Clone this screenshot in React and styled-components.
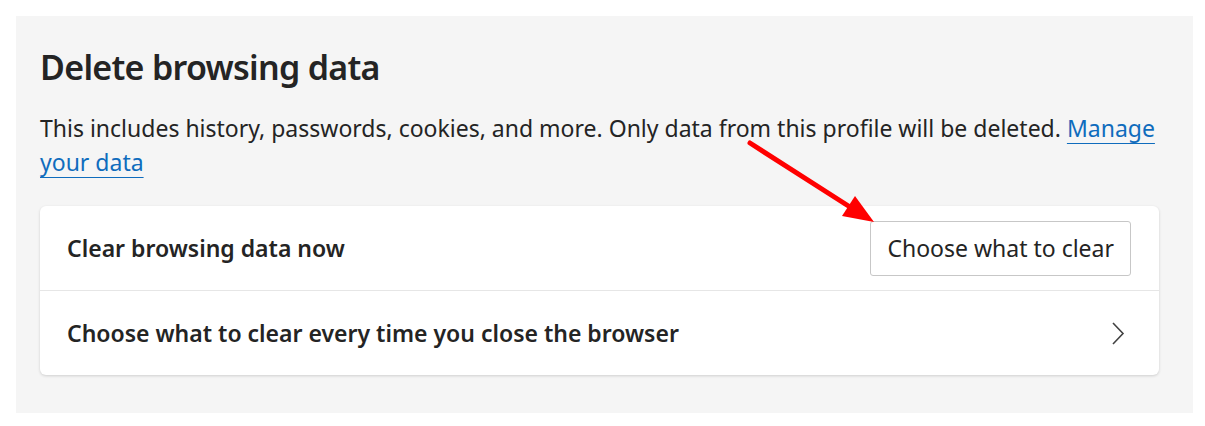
import React from "react";
import styled, { createGlobalStyle } from "styled-components";

const GlobalStyle = createGlobalStyle`
  body {
    margin: 0;
    background: #ffffff;
    font-family: "Noto Sans", "Open Sans", sans-serif;
    color: #242424;
  }
`;

const Page = styled.div`
  padding: 16px 12px 13px 16px;
`;

const Panel = styled.section`
  position: relative;
  background: #f5f5f5;
  padding: 29px 34px 38px 24px;
  height: 397px;
  box-sizing: border-box;
`;

const Heading = styled.h1`
  margin: 0;
  font-size: 34px;
  font-weight: 600;
  line-height: 44px;
  letter-spacing: -0.7px;
`;

const Intro = styled.p`
  margin: 22px 0 27px;
  font-size: 23px;
  line-height: 34px;
`;

const Link = styled.a`
  color: #0f6cbd;
  text-decoration: underline;
  text-underline-offset: 6px;
  text-decoration-thickness: 1px;
`;

const Card = styled.div`
  background: #ffffff;
  border-radius: 6px;
  box-shadow: 0 1px 3px rgba(0, 0, 0, 0.16);
`;

const Row = styled.div`
  display: flex;
  align-items: center;
  justify-content: space-between;
  height: 84px;
  padding: 0 28px 0 27px;
  border-top: ${(p) => (p.$divided ? "1px solid #e6e6e6" : "none")};
`;

const RowLabel = styled.span`
  font-size: 23px;
  font-weight: 600;
`;

const Button = styled.button`
  font-family: inherit;
  font-size: 23px;
  color: #242424;
  background: #ffffff;
  border: 1px solid #c7c7c7;
  border-radius: 3px;
  height: 55px;
  padding: 0 16px;
  cursor: pointer;
`;

const ChevronIcon = styled.svg`
  margin-right: 6px;
`;

const Arrow = styled.svg`
  position: absolute;
  left: 720px;
  top: 115px;
  pointer-events: none;
`;

const Chevron = () => (
  <ChevronIcon width="14" height="24" viewBox="0 0 14 24" fill="none">
    <path d="M2 2 L12 12.5 L2 23" stroke="#424242" strokeWidth="1.6" />
  </ChevronIcon>
);

export default function App() {
  return (
    <>
      <GlobalStyle />
      <Page>
        <Panel>
          <Heading>Delete browsing data</Heading>
          <Intro>
            This includes history, passwords, cookies, and more. Only data from
            this profile will be deleted. <Link href="#">Manage your data</Link>
          </Intro>
          <Card>
            <Row>
              <RowLabel>Clear browsing data now</RowLabel>
              <Button>Choose what to clear</Button>
            </Row>
            <Row $divided>
              <RowLabel>
                Choose what to clear every time you close the browser
              </RowLabel>
              <Chevron />
            </Row>
          </Card>
          <Arrow width="160" height="110" viewBox="0 0 160 110">
            <line x1="14" y1="12" x2="114" y2="76" stroke="#ff0000" strokeWidth="5" strokeLinecap="round" />
            <polygon points="138,91 106,85 119,65" fill="#ff0000" />
          </Arrow>
        </Panel>
      </Page>
    </>
  );
}
